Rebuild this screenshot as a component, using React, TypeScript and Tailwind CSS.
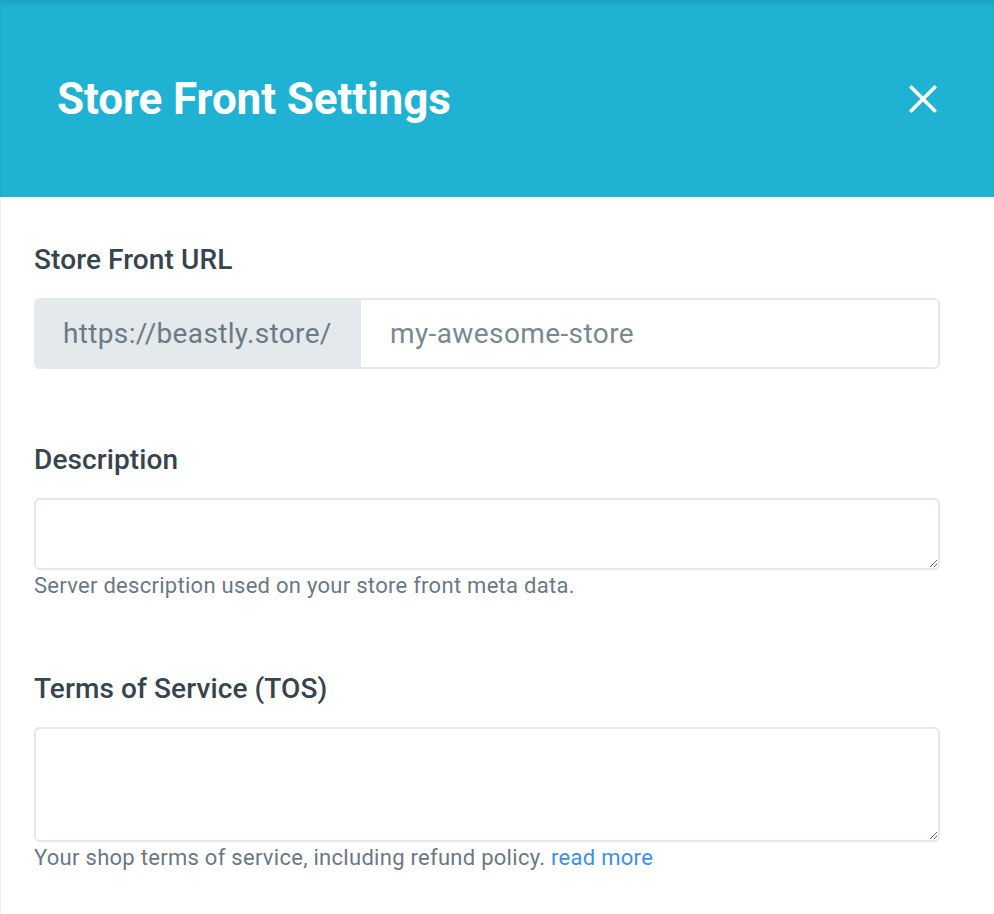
import { X } from "lucide-react";

const font = { fontFamily: "Roboto, 'Noto Sans', sans-serif" };

function Field({
  label,
  help,
  children,
}: {
  label: string;
  help?: React.ReactNode;
  children: React.ReactNode;
}) {
  return (
    <div className="flex flex-col">
      <label className="text-[28px] leading-[32px] font-medium tracking-[0.1px] text-[#36444e]">{label}</label>
      <div className="mt-[22px]">{children}</div>
      {help && (
        <p className="mt-[1px] text-[22px] leading-[30px] tracking-[0.28px] text-[#6b7884]">{help}</p>
      )}
    </div>
  );
}

export default function App() {
  return (
    <div className="flex h-[914px] w-[994px] flex-col overflow-hidden bg-white" style={font}>
      <header className="flex h-[197px] shrink-0 items-center justify-between bg-[#20b2d3] pl-[57px] pr-[48px] shadow-[inset_0_5px_6px_-3px_rgba(0,0,0,0.12)]">
        <h1 className="text-[44px] leading-none font-bold tracking-[-0.1px] text-white">Store Front Settings</h1>
        <button className="flex h-[46px] w-[46px] items-center justify-center text-white">
          <X size={46} strokeWidth={1.85} strokeLinecap="square" />
        </button>
      </header>

      <main className="flex flex-1 flex-col border-l border-[#efefef] pt-[47px] pl-[33px] pr-[54px]">
        <Field label="Store Front URL">
          <div className="flex h-[71px] overflow-hidden rounded-[6px] border-2 border-[#e3e8eb]">
            <span className="flex w-[325px] shrink-0 items-center bg-[#e4e9ec] pl-[27px] text-[28px] tracking-[0.35px] text-[#6c7a86]">
              https://beastly.store/
            </span>
            <input
              className="min-w-0 flex-1 bg-white pl-[29px] text-[28px] tracking-[0.4px] text-[#36444e] outline-none placeholder:text-[#7b8791]"
              placeholder="my-awesome-store"
            />
          </div>
        </Field>

        <div className="mt-[75px]">
          <Field label="Description" help="Server description used on your store front meta data.">
            <textarea className="block h-[72px] w-full rounded-[6px] border-2 border-[#e3e8eb] px-3 py-2 text-[24px] outline-none" />
          </Field>
        </div>

        <div className="mt-[72px]">
          <Field
            label="Terms of Service (TOS)"
            help={
              <>
                Your shop terms of service, including refund policy.{" "}
                <a href="#" className="text-[#3f8fe8]">read more</a>
              </>
            }
          >
            <textarea className="block h-[115px] w-full rounded-[6px] border-2 border-[#e3e8eb] px-3 py-2 text-[24px] outline-none" />
          </Field>
        </div>
      </main>
    </div>
  );
}
